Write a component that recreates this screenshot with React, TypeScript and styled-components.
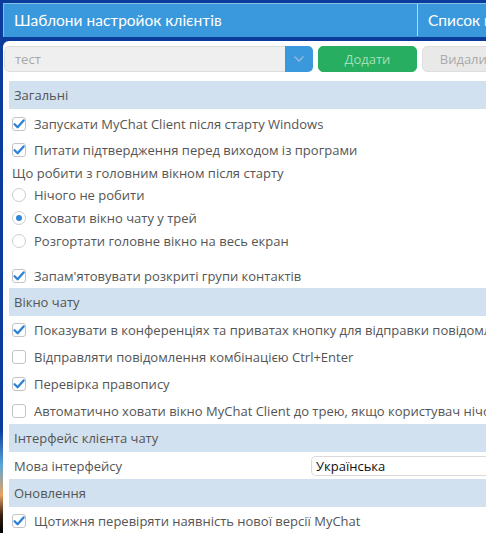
import React from "react";
import styled, { createGlobalStyle } from "styled-components";

const Global = createGlobalStyle`
  html, body {
    margin: 0;
    padding: 0;
    width: 486px;
    height: 533px;
    overflow: hidden;
  }
  body {
    background: linear-gradient(
      to bottom,
      #0b3c9c 0px,
      #0b3c9c 430px,
      #5aa6d8 465px,
      #e8a060 495px,
      #3a2010 515px,
      #000 533px
    );
    font-family: "Open Sans", "Noto Sans", sans-serif;
  }
`;

const Shell = styled.div`
  padding: 3px 0 0 3px;
  width: 600px;
  height: 530px;
  display: flex;
  flex-direction: column;
`;

const Header = styled.div`
  display: flex;
  height: 34px;
  background: #3a98dc;
  border: 1px solid #86bde9;
  border-right: none;
  box-sizing: border-box;
  border-bottom-color: #3a98dc;
`;

const Tab = styled.div<{ $w?: number }>`
  ${(p) => (p.$w ? `width: ${p.$w}px;` : "flex: 1;")}
  display: flex;
  align-items: center;
  padding-left: 10px;
  box-sizing: border-box;
  color: #fff;
  font-family: Lato, "Open Sans", sans-serif;
  font-size: 15.5px;
  white-space: nowrap;
  border-right: 1px solid #b9d6ef;
`;

const Panel = styled.div`
  margin-top: 4px;
  flex: 1;
  background: #fff;
  border-top-left-radius: 6px;
  padding: 5px 0 0 1px;
  overflow: hidden;
`;

const Toolbar = styled.div`
  display: flex;
  gap: 5px;
  height: 26px;
`;

const Combo = styled.div`
  width: 309px;
  display: flex;
  border-radius: 5px;
  overflow: hidden;
`;

const ComboText = styled.div`
  flex: 1;
  background: #efefef;
  border: 1px solid #dcdcdc;
  border-right: none;
  border-radius: 5px 0 0 5px;
  color: #a8a8a8;
  font-size: 13px;
  display: flex;
  align-items: center;
  padding-left: 10px;
`;

const ComboArrow = styled.div`
  width: 28px;
  background: #3a98dc;
  display: flex;
  align-items: center;
  justify-content: center;
`;

const Btn = styled.div<{ $green?: boolean }>`
  width: ${(p) => (p.$green ? "99px" : "97px")};
  box-sizing: border-box;
  border-radius: 5px;
  display: flex;
  align-items: center;
  justify-content: center;
  font-size: 13px;
  white-space: nowrap;
  background: ${(p) => (p.$green ? "#27ae60" : "#e9e9e9")};
  color: ${(p) => (p.$green ? "#a3dfb8" : "#a9a9a9")};
  border: 1px solid ${(p) => (p.$green ? "#27ae60" : "#dedede")};
`;

const Content = styled.div`
  margin-top: 9px;
  padding-left: 5px;
  display: flex;
  flex-direction: column;
`;

const SectionBar = styled.div`
  height: 28px;
  background: #d1e1ef;
  color: #555;
  font-size: 13px;
  display: flex;
  align-items: center;
  padding-left: 5px;
`;

const Row = styled.div<{ $h: number }>`
  height: ${(p) => p.$h}px;
  display: flex;
  align-items: center;
  padding-left: 3px;
  gap: 8px;
  color: #555;
  font-size: 13px;
  white-space: nowrap;
`;

const Caption = styled.div`
  height: 20px;
  display: flex;
  align-items: center;
  padding-left: 3px;
  color: #555;
  font-size: 13px;
  white-space: nowrap;
`;

const Spacer = styled.div<{ $h: number }>`
  height: ${(p) => p.$h}px;
`;

const Box = styled.span`
  width: 14px;
  height: 14px;
  box-sizing: border-box;
  border: 1px solid #c4c4c4;
  border-radius: 3px;
  background: #fff;
  display: inline-flex;
  align-items: center;
  justify-content: center;
  flex: none;
`;

const Round = styled.span`
  width: 14px;
  height: 14px;
  box-sizing: border-box;
  border: 1px solid #cdcdcd;
  border-radius: 50%;
  background: #fff;
  display: inline-flex;
  align-items: center;
  justify-content: center;
  flex: none;
`;

const Dot = styled.span`
  width: 6px;
  height: 6px;
  border-radius: 50%;
  background: #2f86d8;
`;

const LangRow = styled.div`
  height: 27px;
  display: flex;
  align-items: center;
  padding-left: 5px;
  color: #555;
  font-size: 13px;
  white-space: nowrap;
`;

const LangLabel = styled.div`
  width: 297px;
`;

const LangInput = styled.div`
  flex: 1;
  height: 20px;
  box-sizing: border-box;
  border: 1px solid #dadada;
  border-right: none;
  border-radius: 5px 0 0 5px;
  color: #111;
  font-size: 13px;
  display: flex;
  align-items: center;
  padding-left: 4px;
`;

const Check = ({ on }: { on: boolean }) => (
  <Box>
    {on && (
      <svg width="12" height="12" viewBox="0 0 12 12">
        <path
          d="M1.6 6.2 L4.6 9.2 L10.6 2.4"
          fill="none"
          stroke="#2d82d6"
          strokeWidth="2.3"
          strokeLinecap="round"
          strokeLinejoin="round"
        />
      </svg>
    )}
  </Box>
);

const CheckRow = ({ on, h = 27, children }: { on: boolean; h?: number; children: React.ReactNode }) => (
  <Row $h={h}>
    <Check on={on} />
    <span>{children}</span>
  </Row>
);

const RadioRow = ({ on, children }: { on: boolean; children: React.ReactNode }) => (
  <Row $h={23}>
    <Round>{on && <Dot />}</Round>
    <span>{children}</span>
  </Row>
);

export default function App() {
  return (
    <>
      <Global />
      <Shell>
        <Header>
          <Tab $w={414}>Шаблони настройок клієнтів</Tab>
          <Tab>Список користувачів</Tab>
        </Header>
        <Panel>
          <Toolbar>
            <Combo>
              <ComboText>тест</ComboText>
              <ComboArrow>
                <svg width="12" height="8" viewBox="0 0 12 8">
                  <path d="M1.5 1.5 L6 6 L10.5 1.5" fill="none" stroke="#9bbad6" strokeWidth="1.3" />
                </svg>
              </ComboArrow>
            </Combo>
            <Btn $green>Додати</Btn>
            <Btn>Видалити</Btn>
          </Toolbar>
          <Content>
            <SectionBar>Загальні</SectionBar>
            <Spacer $h={1} />
            <CheckRow on>Запускати MyChat Client після старту Windows</CheckRow>
            <CheckRow on h={26}>Питати підтвердження перед виходом із програми</CheckRow>
            <Caption>Що робити з головним вікном після старту</Caption>
            <RadioRow on={false}>Нічого не робити</RadioRow>
            <RadioRow on>Сховати вікно чату у трей</RadioRow>
            <RadioRow on={false}>Розгортати головне вікно на весь екран</RadioRow>
            <Spacer $h={12} />
            <CheckRow on h={24}>Запам'ятовувати розкриті групи контактів</CheckRow>
            <SectionBar>Вікно чату</SectionBar>
            <CheckRow on>Показувати в конференціях та приватах кнопку для відправки повідомлень</CheckRow>
            <CheckRow on={false}>Відправляти повідомлення комбінацією Ctrl+Enter</CheckRow>
            <CheckRow on>Перевірка правопису</CheckRow>
            <CheckRow on={false}>
              Автоматично ховати вікно MyChat Client до трею, якщо користувач нічого не робить
            </CheckRow>
            <SectionBar>Інтерфейс клієнта чату</SectionBar>
            <LangRow>
              <LangLabel>Мова інтерфейсу</LangLabel>
              <LangInput>Українська</LangInput>
            </LangRow>
            <SectionBar>Оновлення</SectionBar>
            <CheckRow on>Щотижня перевіряти наявність нової версії MyChat</CheckRow>
          </Content>
        </Panel>
      </Shell>
    </>
  );
}
